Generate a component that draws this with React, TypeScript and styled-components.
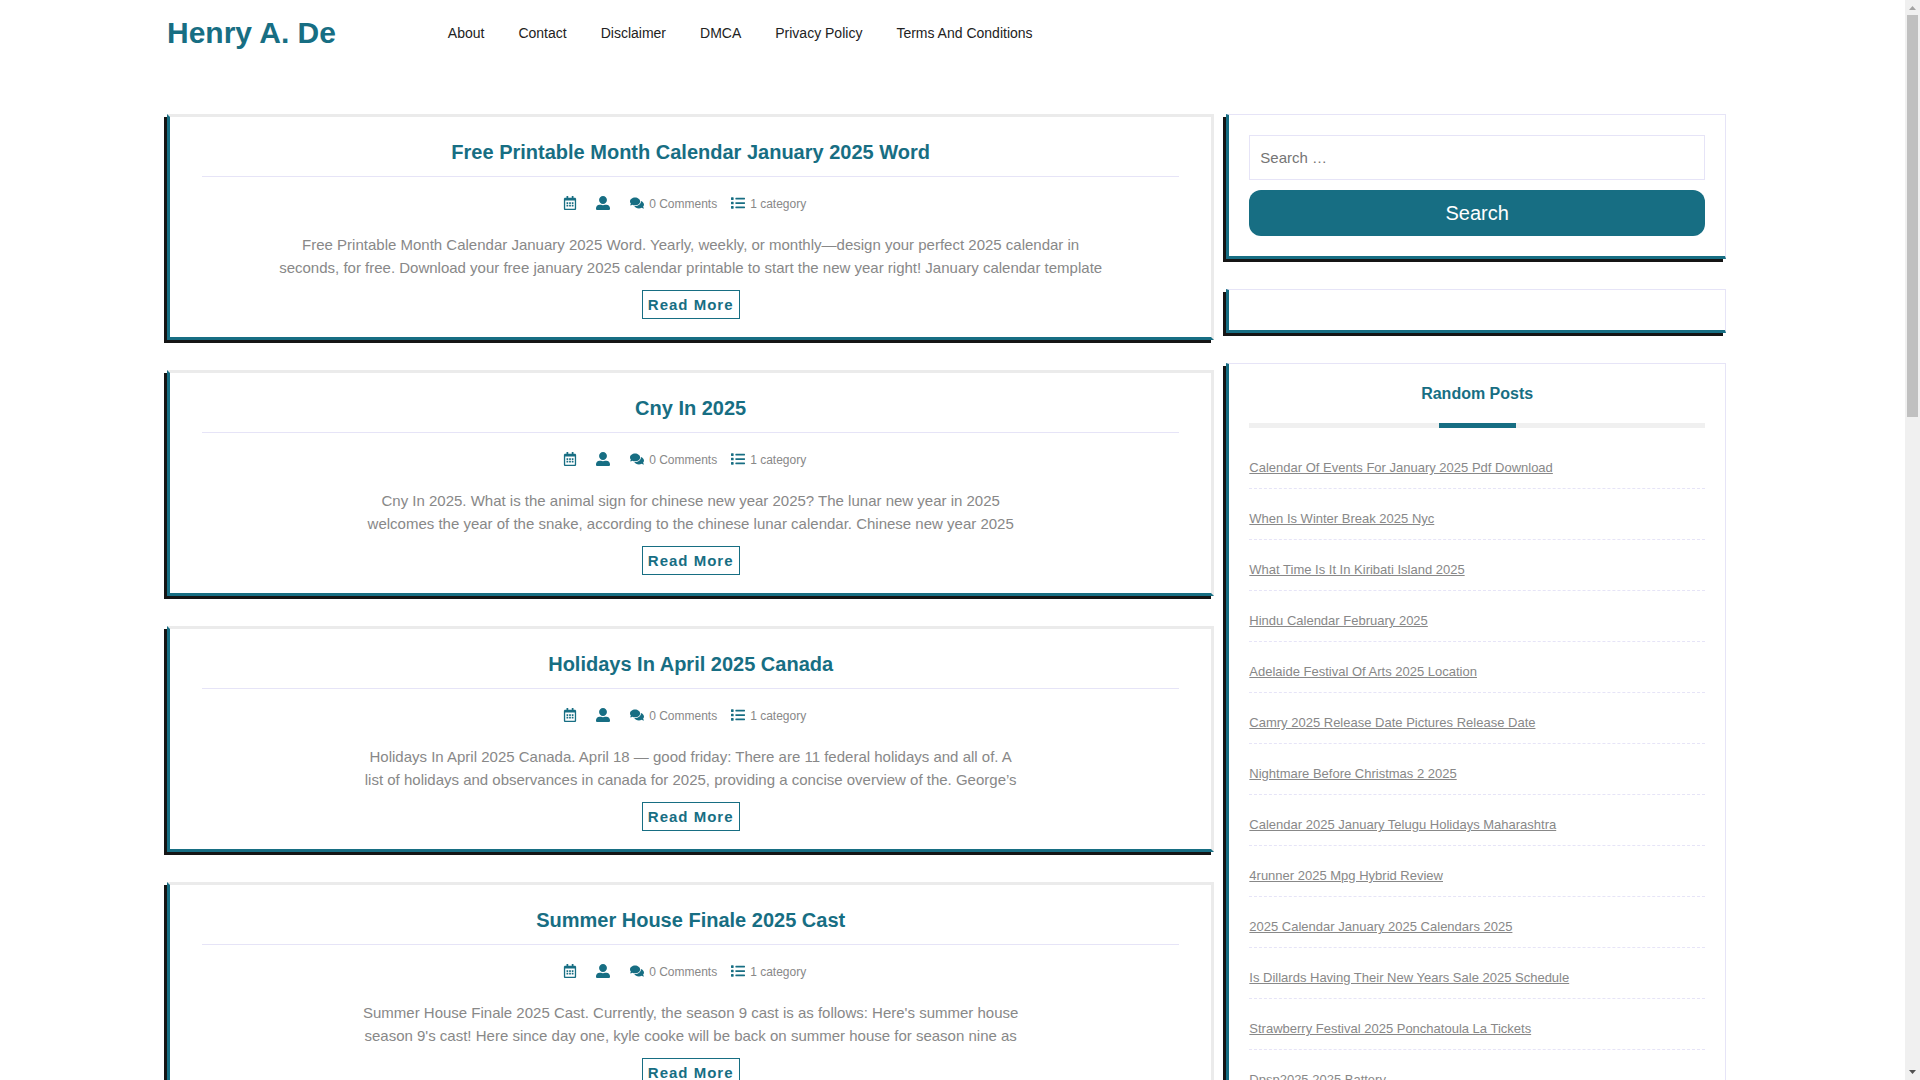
import React from "react";
import styled, { createGlobalStyle } from "styled-components";
import { FaComments, FaList, FaRegCalendarAlt, FaUserAlt } from "react-icons/fa";

const teal = "#176e83";
const lilac = "#e6e4f7";
const grey = "#888";

const GlobalStyle = createGlobalStyle`
  *, *::before, *::after { box-sizing: border-box; }
  body {
    margin: 0;
    background: #fff;
    color: ${grey};
    font-family: "Liberation Sans", Arial, sans-serif;
    font-size: 15px;
  }
`;

const Shell = styled.div`
  display: grid;
  grid-template-columns: minmax(0, 1fr) 15px;
  height: 100vh;
`;

const Page = styled.div`
  overflow-y: auto;
  scrollbar-width: none;
  padding: 0 167px;
`;

const Track = styled.div`
  display: flex;
  flex-direction: column;
  align-items: center;
  background: #f0f0f0;
`;

const ArrowBox = styled.svg`
  width: 15px;
  height: 15px;
  flex: none;
`;

const Rail = styled.div`
  flex: 1;
  width: 11px;
`;

const Thumb = styled.div`
  height: 402px;
  background: #c0c0c0;
`;

const Header = styled.header`
  display: grid;
  grid-template-columns: 1fr 5fr;
  align-items: center;
  height: 66px;
`;

const Brand = styled.a`
  color: ${teal};
  font-size: 30px;
  font-weight: 700;
  line-height: 36px;
  text-decoration: none;
  white-space: nowrap;
`;

const Nav = styled.nav`
  display: flex;
  gap: 34px;
  padding-left: 19px;
`;

const NavLink = styled.a`
  color: #222;
  font-size: 14px;
  line-height: 20px;
  text-decoration: none;
`;

const Columns = styled.div`
  display: grid;
  grid-template-columns: 2fr 1fr;
  align-items: start;
  padding: 48px 0 30px;
`;

const Posts = styled.main`
  display: grid;
  gap: 30px;
`;

const Post = styled.article`
  display: flex;
  flex-direction: column;
  align-items: center;
  padding: 21px 32px 18px;
  border: 3px solid #ebebeb;
  border-left-color: ${teal};
  border-bottom-color: ${teal};
  box-shadow: -3px 3px #151515;
  text-align: center;
`;

const PostTitle = styled.h2`
  width: 100%;
  margin: 0;
  padding-bottom: 10px;
  border-bottom: 1px solid ${lilac};
  color: ${teal};
  font-size: 20px;
  line-height: 28px;

  a {
    color: inherit;
    text-decoration: none;
  }
`;

const Meta = styled.div`
  display: flex;
  align-items: center;
  margin: 16px 12px 18px 0;
  height: 22px;
  font-size: 12px;
  line-height: 22px;
`;

const MetaItem = styled.span<{ $gap: number }>`
  display: flex;
  align-items: center;
  gap: 5px;
  margin-right: ${(p) => p.$gap}px;

  svg {
    margin-bottom: 3px;
    color: ${teal};
    font-size: 14px;
  }
`;

const Excerpt = styled.p`
  margin: 0 0 11px;
  line-height: 23px;
  white-space: pre-line;
`;

const ReadMore = styled.a`
  padding: 0 5px;
  border: 1px solid ${teal};
  color: ${teal};
  font-weight: 700;
  line-height: 27px;
  letter-spacing: 1px;
  text-decoration: none;
`;

const Sidebar = styled.aside`
  display: grid;
  gap: 30px;
  padding: 0 12px;
`;

const Widget = styled.section`
  padding: 20px;
  border: 1px solid ${lilac};
  border-left: 3px solid ${teal};
  border-bottom: 3px solid ${teal};
  box-shadow: -3px 3px #151515;
`;

const SearchForm = styled.form`
  display: grid;
  gap: 10px;
`;

const SearchInput = styled.input`
  width: 100%;
  height: 45px;
  padding: 0 10px;
  border: 1px solid ${lilac};
  font: inherit;
  color: #222;

  &::placeholder {
    color: #757575;
  }
`;

const SearchButton = styled.button`
  height: 46px;
  border: 0;
  border-radius: 12px;
  background: ${teal};
  color: #fff;
  font-family: inherit;
  font-size: 20px;
`;

const WidgetTitle = styled.h3`
  margin: 0 0 10px;
  color: ${teal};
  font-size: 16px;
  line-height: 20px;
  text-align: center;

  &::after {
    content: "";
    display: block;
    height: 5px;
    margin-top: 19px;
    background: linear-gradient(${teal}, ${teal}) center / 77px 5px no-repeat #f0f0f0;
  }
`;

const LinkList = styled.ul`
  margin: 0;
  padding: 0;
  list-style: none;
`;

const LinkItem = styled.li`
  padding: 20px 0 10px;
  border-bottom: 1px dashed ${lilac};
  font-size: 13px;
  line-height: 20px;

  a {
    color: inherit;
  }
`;

const navItems = ["About", "Contact", "Disclaimer", "DMCA", "Privacy Policy", "Terms And Conditions"];

const posts = [
  {
    title: "Free Printable Month Calendar January 2025 Word",
    text: "Free Printable Month Calendar January 2025 Word. Yearly, weekly, or monthly—design your perfect 2025 calendar in\nseconds, for free. Download your free january 2025 calendar printable to start the new year right! January calendar template",
  },
  {
    title: "Cny In 2025",
    text: "Cny In 2025. What is the animal sign for chinese new year 2025? The lunar new year in 2025\nwelcomes the year of the snake, according to the chinese lunar calendar. Chinese new year 2025",
  },
  {
    title: "Holidays In April 2025 Canada",
    text: "Holidays In April 2025 Canada. April 18 — good friday: There are 11 federal holidays and all of. A\nlist of holidays and observances in canada for 2025, providing a concise overview of the. George’s",
  },
  {
    title: "Summer House Finale 2025 Cast",
    text: "Summer House Finale 2025 Cast. Currently, the season 9 cast is as follows: Here's summer house\nseason 9's cast! Here since day one, kyle cooke will be back on summer house for season nine as",
  },
];

const randomPosts = [
  "Calendar Of Events For January 2025 Pdf Download",
  "When Is Winter Break 2025 Nyc",
  "What Time Is It In Kiribati Island 2025",
  "Hindu Calendar February 2025",
  "Adelaide Festival Of Arts 2025 Location",
  "Camry 2025 Release Date Pictures Release Date",
  "Nightmare Before Christmas 2 2025",
  "Calendar 2025 January Telugu Holidays Maharashtra",
  "4runner 2025 Mpg Hybrid Review",
  "2025 Calendar January 2025 Calendars 2025",
  "Is Dillards Having Their New Years Sale 2025 Schedule",
  "Strawberry Festival 2025 Ponchatoula La Tickets",
  "Dpsp2025 2025 Battery",
];

export default function App() {
  return (
    <Shell>
      <GlobalStyle />
      <Page>
        <Header>
          <Brand href="#">Henry A. De</Brand>
          <Nav>
            {navItems.map((item) => (
              <NavLink key={item} href="#">{item}</NavLink>
            ))}
          </Nav>
        </Header>
        <Columns>
          <Posts>
            {posts.map((post) => (
              <Post key={post.title}>
                <PostTitle><a href="#">{post.title}</a></PostTitle>
                <Meta>
                  <MetaItem $gap={19}><FaRegCalendarAlt /></MetaItem>
                  <MetaItem $gap={20}><FaUserAlt /></MetaItem>
                  <MetaItem $gap={14}><FaComments />0 Comments</MetaItem>
                  <MetaItem $gap={0}><FaList />1 category</MetaItem>
                </Meta>
                <Excerpt>{post.text}</Excerpt>
                <ReadMore href="#">Read More</ReadMore>
              </Post>
            ))}
          </Posts>
          <Sidebar>
            <Widget>
              <SearchForm onSubmit={(e) => e.preventDefault()}>
                <SearchInput type="search" aria-label="Search for" placeholder="Search …" />
                <SearchButton type="submit">Search</SearchButton>
              </SearchForm>
            </Widget>
            <Widget />
            <Widget>
              <WidgetTitle>Random Posts</WidgetTitle>
              <LinkList>
                {randomPosts.map((title) => (
                  <LinkItem key={title}><a href="#">{title}</a></LinkItem>
                ))}
              </LinkList>
            </Widget>
          </Sidebar>
        </Columns>
      </Page>
      <Track aria-hidden="true">
        <ArrowBox viewBox="0 0 15 15"><path d="M4 10h7L7.5 6z" fill="#a3a3a3" /></ArrowBox>
        <Rail><Thumb /></Rail>
        <ArrowBox viewBox="0 0 15 15"><path d="M4 5h7L7.5 9z" fill="#505050" /></ArrowBox>
      </Track>
    </Shell>
  );
}
